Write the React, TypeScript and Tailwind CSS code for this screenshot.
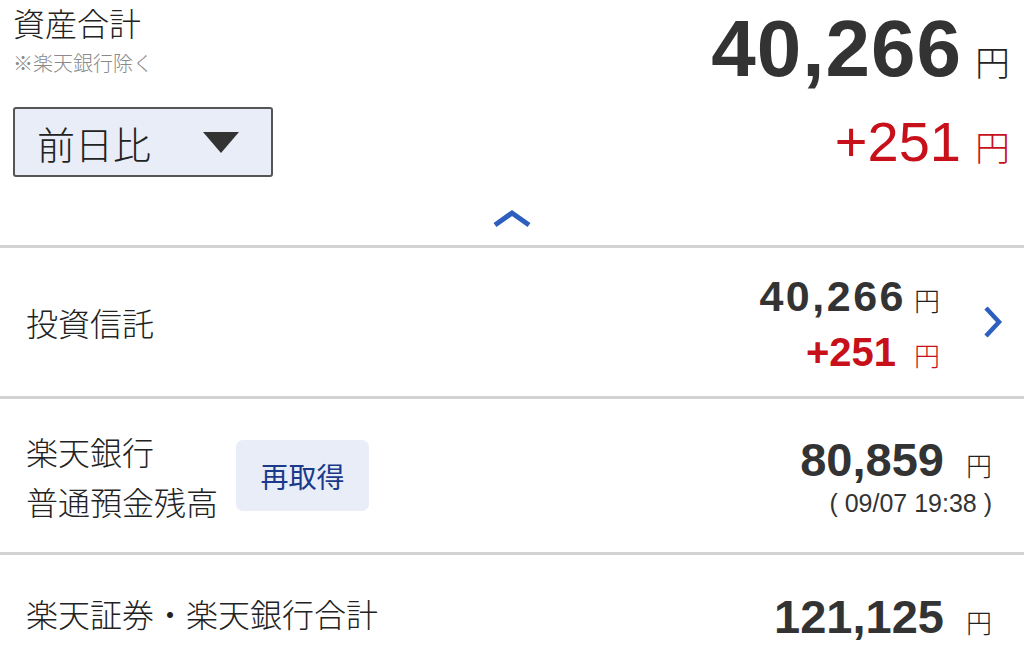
import React from "react";

const jp = { fontFamily: '"Noto Sans CJK JP", "Noto Sans", sans-serif' };
const num = { fontFamily: '"Liberation Sans", Arial, sans-serif' };

function Yen({ className }: { className: string }) {
  return (
    <span className={className} style={jp}>
      円
    </span>
  );
}

export default function App() {
  return (
    <div className="w-[1024px] h-[663px] overflow-hidden bg-white text-[#222]">
      {/* header */}
      <div className="px-[13px]">
        <div className="flex justify-between h-[100px]">
          <div className="pt-[2px]">
            <div className="text-[32px] leading-[40px] font-light" style={jp}>
              資産合計
            </div>
            <div className="text-[20px] leading-[26px] mt-[8px] text-[#8a8a8a] font-light" style={jp}>
              ※楽天銀行除く
            </div>
          </div>
          <div className="flex items-baseline pr-[1px] pt-[4px]">
            <span className="text-[80px] leading-[90px] font-bold text-[#333] tracking-[1px]" style={num}>
              40,266
            </span>
            <Yen className="text-[35px] ml-[13px] font-light text-[#222]" />
          </div>
        </div>
        <div className="flex justify-between items-center mt-[7px] h-[70px]">
          <div className="w-[260px] h-[70px] border-2 border-[#555] rounded-[3px] bg-[#e9edf7] flex items-center pl-[22px] pr-[32px] justify-between">
            <span className="text-[38px] font-light text-[#222]" style={jp}>
              前日比
            </span>
            <svg width="36" height="21" viewBox="0 0 36 21">
              <polygon points="0,0 36,0 18,21" fill="#333" />
            </svg>
          </div>
          <div className="flex items-baseline pr-[1px] text-[#c8101a]">
            <span className="text-[56px] leading-[60px]" style={num}>
              +251
            </span>
            <Yen className="text-[35px] ml-[14px] font-light" />
          </div>
        </div>
      </div>
      <div className="h-[68px] flex items-start justify-center pt-[30px]">
        <svg width="40" height="22" viewBox="0 0 40 22">
          <polyline points="3,18 20,6 37,18" fill="none" stroke="#2e5fbf" strokeWidth="5" strokeLinejoin="miter" />
        </svg>
      </div>

      {/* row 1 */}
      <div className="border-t-[3px] border-[#d3d3d3] h-[151px] flex items-center pl-[26px] pr-[20px]">
        <div className="flex-1 text-[32px] font-light" style={jp}>
          投資信託
        </div>
        <div className="flex flex-col items-end mr-[42px] pt-[4px]">
          <div className="flex items-baseline">
            <span className="text-[43px] leading-[50px] font-bold text-[#333] tracking-[2.5px]" style={num}>
              40,266
            </span>
            <Yen className="text-[26px] ml-[8px] font-light text-[#222]" />
          </div>
          <div className="flex items-baseline text-[#c8101a] mt-[6px]">
            <span className="text-[40px] leading-[50px] font-bold" style={num}>
              +251
            </span>
            <Yen className="text-[26px] ml-[18px] font-light" />
          </div>
        </div>
        <svg width="22" height="34" viewBox="0 0 22 34">
          <polyline points="4,3 17,17 4,31" fill="none" stroke="#2e5fbf" strokeWidth="4.5" />
        </svg>
      </div>

      {/* row 2 */}
      <div className="border-t-[3px] border-[#d3d3d3] h-[156px] flex items-center pl-[26px] pr-[32px]">
        <div className="text-[32px] leading-[50px] font-light" style={jp}>
          <div>楽天銀行</div>
          <div>普通預金残高</div>
        </div>
        <div className="ml-[18px] w-[133px] h-[71px] rounded-[7px] bg-[#e9edf7] flex items-center justify-center text-[28px] text-[#1b3a8c]" style={jp}>
          再取得
        </div>
        <div className="flex-1 flex flex-col items-end">
          <div className="flex items-baseline">
            <span className="text-[47px] leading-[52px] font-bold text-[#333]" style={num}>
              80,859
            </span>
            <Yen className="text-[26px] ml-[22px] font-light text-[#222]" />
          </div>
          <div className="text-[25px] leading-[30px] mt-[2px] text-[#333]" style={num}>
            ( 09/07 19:38 )
          </div>
        </div>
      </div>

      {/* row 3 */}
      <div className="border-t-[3px] border-[#d3d3d3] h-[120px] flex items-start pt-[36px] pl-[26px] pr-[32px]">
        <div className="flex-1 text-[32px] leading-[44px] font-light" style={jp}>
          楽天証券・楽天銀行合計
        </div>
        <div className="flex items-baseline">
          <span className="text-[47px] leading-[52px] font-bold text-[#333]" style={num}>
            121,125
          </span>
          <Yen className="text-[26px] ml-[22px] font-light text-[#222]" />
        </div>
      </div>
    </div>
  );
}
